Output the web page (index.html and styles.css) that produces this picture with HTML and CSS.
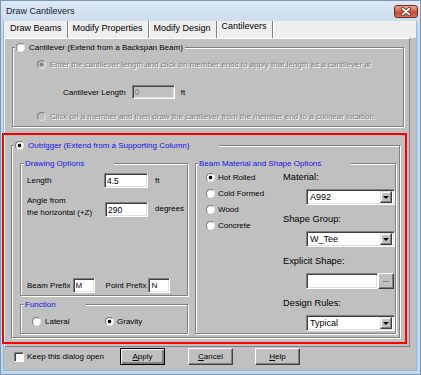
FILE: index.html
```html
<!DOCTYPE html>
<html lang="en">
<head>
    <meta charset="UTF-8">
    <meta name="viewport" content="width=device-width, initial-scale=1.0">
    <title>Draw Cantilevers</title>
    <link rel="stylesheet" href="styles.css">
</head>
<body>

    <div class="window">
        <div class="titlebar">
            <span class="title">Draw Cantilevers</span>
            <div class="close-btn">
                <svg width="12" height="9" viewBox="0 0 12 9">
                    <path d="M2.5 1.5L9.5 7.5M9.5 1.5L2.5 7.5" stroke="#5e2219" stroke-width="3.4" stroke-linecap="round"/>
                    <path d="M2.5 1.5L9.5 7.5M9.5 1.5L2.5 7.5" stroke="#fff" stroke-width="1.8" stroke-linecap="round"/>
                </svg>
            </div>
        </div>

        <div class="client">
            <div class="tabs">
                <div class="tab">Draw Beams</div>
                <div class="tab">Modify Properties</div>
                <div class="tab">Modify Design</div>
                <div class="tab active">Cantilevers</div>
            </div>

            <div class="pane">
                <fieldset class="group cantilever">
                    <legend><span class="radio"></span>Cantilever (Extend from a Backspan Beam)</legend>
                    <div class="content">
                        <div class="option off"><span class="radio checked"></span>Enter the cantilever length and click on member ends to apply that length as a cantilever at</div>
                        <div class="length-row">
                            <span>Cantilever Length</span>
                            <input class="field" type="text" value="0" disabled>
                            <span>ft</span>
                        </div>
                        <div class="option off"><span class="radio"></span>Click on a member and then draw the cantilever from the member end to a colinear location.</div>
                    </div>
                </fieldset>

                <div class="highlight">
                    <fieldset class="group outrigger">
                        <legend class="blue"><span class="radio checked"></span>Outrigger (Extend from a Supporting Column)</legend>
                        <div class="columns">
                            <div class="left-col">
                                <fieldset class="group drawing">
                                    <legend class="blue">Drawing Options</legend>
                                    <div class="content">
                                        <div class="param">
                                            <span class="lbl">Length</span>
                                            <input class="field" type="text" value="4.5">
                                            <span class="unit">ft</span>
                                        </div>
                                        <div class="param angle">
                                            <span class="lbl">Angle from<br>the horizontal (+Z)</span>
                                            <input class="field" type="text" value="290">
                                            <span class="unit">degrees</span>
                                        </div>
                                        <div class="prefixes">
                                            <span>Beam Prefix</span>
                                            <input class="field small" type="text" value="M">
                                            <span class="point">Point Prefix</span>
                                            <input class="field small" type="text" value="N">
                                        </div>
                                    </div>
                                </fieldset>

                                <fieldset class="group function">
                                    <legend class="blue">Function</legend>
                                    <div class="content">
                                        <div class="choice lateral"><span class="radio"></span>Lateral</div>
                                        <div class="choice"><span class="radio checked"></span>Gravity</div>
                                    </div>
                                </fieldset>
                            </div>

                            <fieldset class="group material">
                                <legend class="blue">Beam Material and Shape Options</legend>
                                <div class="content">
                                    <div class="kinds">
                                        <div class="choice"><span class="radio checked"></span>Hot Rolled</div>
                                        <div class="choice"><span class="radio"></span>Cold Formed</div>
                                        <div class="choice"><span class="radio"></span>Wood</div>
                                        <div class="choice"><span class="radio"></span>Concrete</div>
                                    </div>
                                    <div class="props">
                                        <div class="prop-label">Material:</div>
                                        <div class="combo"><span>A992</span><span class="drop"></span></div>
                                        <div class="prop-label">Shape Group:</div>
                                        <div class="combo"><span>W_Tee</span><span class="drop"></span></div>
                                        <div class="prop-label">Explicit Shape:</div>
                                        <div class="explicit">
                                            <input class="field" type="text" value="">
                                            <span class="dots">...</span>
                                        </div>
                                        <div class="prop-label">Design Rules:</div>
                                        <div class="combo"><span>Typical</span><span class="drop"></span></div>
                                    </div>
                                </div>
                            </fieldset>
                        </div>
                    </fieldset>
                </div>
            </div>

            <div class="footer">
                <div class="keep"><span class="check"></span>Keep this dialog open</div>
                <button class="btn default"><u>A</u>pply</button>
                <button class="btn"><u>C</u>ancel</button>
                <button class="btn"><u>H</u>elp</button>
            </div>
        </div>
    </div>

</body>
</html>
```

FILE: styles.css
```css
* { box-sizing: border-box; }
body { margin: 0; font-family: "Liberation Sans", Arial, sans-serif; font-size: 8px; color: #000; background: #fff; }

/* window frame */
.window { width: 421px; height: 375px; display: flex; flex-direction: column; background: linear-gradient(#dce8f5, #c4d8ee 30px, #c4d8ee); border: 1px solid #7f97b2; }
.titlebar { height: 20px; flex: none; display: flex; align-items: center; padding: 0 2px 0 5px; }
.title { font-size: 9px; color: #1c1c1c; }
.close-btn { margin-left: auto; width: 24px; height: 13px; border: 1px solid #6e2b21; border-radius: 3px; background: linear-gradient(#eaa99b, #d45c45 50%, #c23f29 51%, #d9735a); display: flex; align-items: center; justify-content: center; }

.client { flex: 1; display: flex; flex-direction: column; margin: 0 3px 3px 2px; background: #c0c0c0; border: 1px solid #8fbccf; border-top: 0; }

/* tabs */
.tabs { display: flex; height: 17px; flex: none; background: #efefef; }
.tab { font-size: 9px; line-height: 11px; padding: 2px 5px 0; border-right: 1px solid #808080; box-shadow: 1px 0 0 #fff; }
.tab:first-child { padding-left: 6px; }
.tab.active { padding-top: 0; }

.pane { flex: none; margin-right: 6px; padding: 3px 0 2px; border: 1px solid; border-color: #fff #808080 #808080 #fff; }

/* group boxes */
.group { margin: 0; padding: 0; min-width: 0; border: 1px solid #808080; box-shadow: inset 1px 1px 0 #fff, 1px 1px 0 #fff; }
.group legend { margin-left: 2px; padding: 0 2px 0 1px; height: 11px; line-height: 11px; background: #c0c0c0; display: flex; align-items: center; gap: 4px; }
.blue { color: #1414e6; }

.radio { width: 9px; height: 9px; flex: none; border-radius: 50%; background: #fff; border: 1px solid; border-color: #7a7a7a #e8e8e8 #e8e8e8 #7a7a7a; }
.radio.checked { background: radial-gradient(circle, #000 0 1.6px, #fff 2.2px); }
.off { color: #808080; text-shadow: 1px 1px 0 #fff; }
.off .radio { background: #c0c0c0; }
.off .radio.checked { background: radial-gradient(circle, #808080 0 1.6px, #c0c0c0 2.2px); }

.field { font-family: inherit; font-size: 8.5px; color: #000; width: 44px; height: 15px; padding: 0 2px; margin: 0; background: #fff; outline: none; border: 1px solid; border-color: #808080 #fff #fff #808080; box-shadow: inset 1px 1px 0 #404040, inset -1px -1px 0 #dfdfdf; }
.field:disabled { background: #c0c0c0; color: #808080; }

/* cantilever */
.cantilever { margin: 0 5px 0 7px; }
.cantilever .content { padding: 6px 0 4px 24px; }
.option { display: flex; align-items: center; gap: 4px; height: 11px; white-space: nowrap; }
.length-row { display: flex; align-items: center; margin: 15px 0 12px 26px; height: 14px; }
.length-row .field { width: 43px; height: 14px; margin: 0 6px 0 6px; }

/* red highlight */
.highlight { margin: 6px 2px 0 -3px; border: 2px solid #ff0000; padding: 5px 5px 4px 7px; }
.outrigger legend { padding-right: 30px; }
.outrigger .columns { display: flex; gap: 7px; padding: 7px 3px 3px 8px; }
.left-col { width: 168px; flex: none; display: flex; flex-direction: column; gap: 3px; }
.drawing legend, .function legend { margin-left: 3px; }

.drawing .content { height: 126px; display: flex; flex-direction: column; padding: 4px 0 2px 6px; }
.param { display: flex; align-items: center; }
.param .lbl { width: 77px; line-height: 12px; }
.param .unit { margin-left: 7px; }
.angle { margin-top: 7px; align-items: flex-start; }
.angle .field { margin-top: 7px; width: 43px; margin-left: 1px; }
.angle .unit { margin-top: 9px; }
.prefixes { margin-top: auto; display: flex; align-items: center; height: 15px; }
.field.small { width: 22px; margin-left: 2px; font-size: 8px; }
.point { margin-left: 11px; }

.function .content { display: flex; padding: 6px 0 6px 11px; }
.choice { display: flex; align-items: center; gap: 3px; height: 11px; }
.lateral { width: 73px; gap: 4px; }

.material { flex: 1; }
.material .content { display: flex; padding: 0 0 0 10px; }
.kinds { width: 77px; flex: none; }
.kinds .choice { height: 16px; }
.props { flex: 1; padding-top: 2px; }
.prop-label { font-size: 9.3px; line-height: 12px; margin-top: 8px; }
.prop-label:first-child { margin-top: 0; }
.combo { margin: 6px 0 0 23px; width: 89px; height: 16px; display: flex; align-items: center; background: #fff; font-size: 9px; padding-left: 3px; border: 1px solid; border-color: #808080 #fff #fff #808080; box-shadow: inset 1px 1px 0 #404040, inset -1px -1px 0 #dfdfdf; }
.drop { margin-left: auto; margin-right: 2px; width: 12px; height: 12px; background: #c0c0c0; border: 1px solid; border-color: #dfdfdf #404040 #404040 #dfdfdf; box-shadow: inset -1px -1px 0 #808080, inset 1px 1px 0 #fff; display: flex; align-items: center; justify-content: center; }
.drop::after { content: ""; border-top: 3px solid #000; border-left: 3px solid transparent; border-right: 3px solid transparent; }
.explicit { margin: 6px 0 0 23px; display: flex; height: 16px; }
.explicit .field { width: 72px; height: 16px; }
.dots { width: 16px; height: 16px; background: #c0c0c0; border: 1px solid; border-color: #fff #404040 #404040 #fff; box-shadow: inset -1px -1px 0 #808080; text-align: center; line-height: 11px; font-size: 8px; }

/* bottom row */
.footer { height: 23px; flex: none; display: flex; align-items: flex-start; padding: 1px 0 0 10px; }
.keep { width: 106px; display: flex; align-items: center; gap: 3px; margin-top: 3px; height: 11px; }
.check { width: 10px; height: 10px; background: #fff; border: 1px solid; border-color: #808080 #fff #fff #808080; box-shadow: inset 1px 1px 0 #404040; }
.btn { width: 45px; height: 17px; margin: 0 22px 0 0; padding: 0; font-family: inherit; font-size: 8px; color: #000; background: #c0c0c0; border: 1px solid; border-color: #fff #404040 #404040 #fff; box-shadow: inset -1px -1px 0 #808080; }
.btn.default { border: 1px solid #000; box-shadow: inset 1px 1px 0 #fff, inset -2px -2px 0 #808080; margin-right: 23px; }
```
